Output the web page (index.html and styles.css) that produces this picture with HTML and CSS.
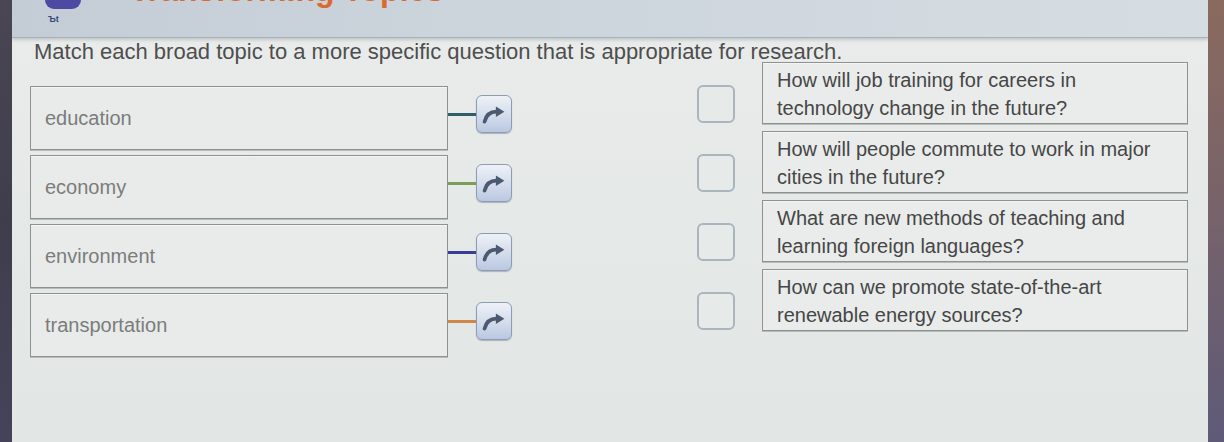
FILE: index.html
```html
<!DOCTYPE html>
<html lang="en">
<head>
<meta charset="utf-8">
<title>Transforming Topics</title>
<link rel="stylesheet" href="styles.css">
</head>
<body>
<div class="screen">
  <div class="bezel bezel-left"></div>
  <main class="main">
    <header class="header">
      <div class="brand">
        <div class="brand-icon"></div>
        <div class="brand-label">Ъt</div>
      </div>
      <div class="title">Transforming Topics</div>
    </header>
    <p class="instruction">Match each broad topic to a more specific question that is appropriate for research.</p>
    <div class="board">
      <div class="topics">
        <div class="topic-row">
          <div class="topic">education</div>
          <div class="connector">
            <span class="line line-teal"></span>
            <span class="arrow-btn"><svg viewBox="0 0 36 38" width="36" height="38"><path d="M8 26 C10 18 15 15 22 15.5" fill="none" stroke="#4b5a70" stroke-width="4" stroke-linecap="round"/><path d="M20 10 L29 15.5 L20 21 Z" fill="#4b5a70"/></svg></span>
          </div>
        </div>
        <div class="topic-row">
          <div class="topic">economy</div>
          <div class="connector">
            <span class="line line-olive"></span>
            <span class="arrow-btn"><svg viewBox="0 0 36 38" width="36" height="38"><path d="M8 26 C10 18 15 15 22 15.5" fill="none" stroke="#4b5a70" stroke-width="4" stroke-linecap="round"/><path d="M20 10 L29 15.5 L20 21 Z" fill="#4b5a70"/></svg></span>
          </div>
        </div>
        <div class="topic-row">
          <div class="topic">environment</div>
          <div class="connector">
            <span class="line line-indigo"></span>
            <span class="arrow-btn"><svg viewBox="0 0 36 38" width="36" height="38"><path d="M8 26 C10 18 15 15 22 15.5" fill="none" stroke="#4b5a70" stroke-width="4" stroke-linecap="round"/><path d="M20 10 L29 15.5 L20 21 Z" fill="#4b5a70"/></svg></span>
          </div>
        </div>
        <div class="topic-row">
          <div class="topic">transportation</div>
          <div class="connector">
            <span class="line line-orange"></span>
            <span class="arrow-btn"><svg viewBox="0 0 36 38" width="36" height="38"><path d="M8 26 C10 18 15 15 22 15.5" fill="none" stroke="#4b5a70" stroke-width="4" stroke-linecap="round"/><path d="M20 10 L29 15.5 L20 21 Z" fill="#4b5a70"/></svg></span>
          </div>
        </div>
      </div>
      <div class="targets">
        <div class="target-row"><span class="checkbox"></span></div>
        <div class="target-row"><span class="checkbox"></span></div>
        <div class="target-row"><span class="checkbox"></span></div>
        <div class="target-row"><span class="checkbox"></span></div>
      </div>
      <div class="questions">
        <div class="question">How will job training for careers in<br>technology change in the future?</div>
        <div class="question">How will people commute to work in major<br>cities in the future?</div>
        <div class="question">What are new methods of teaching and<br>learning foreign languages?</div>
        <div class="question">How can we promote state-of-the-art<br>renewable energy sources?</div>
      </div>
    </div>
  </main>
  <div class="bezel bezel-right"></div>
</div>
</body>
</html>
```

FILE: styles.css
```css
* { box-sizing: border-box; }
html, body { margin: 0; padding: 0; }
body {
  width: 1224px;
  height: 442px;
  overflow: hidden;
  font-family: "Liberation Sans", Arial, sans-serif;
  background: #3d3b48;
}
.screen {
  display: flex;
  width: 1224px;
  height: 442px;
}
.bezel-left {
  width: 12px;
  background: linear-gradient(180deg, #4a4654 0%, #3f3d4c 50%, #45435a 100%);
}
.bezel-right {
  width: 16px;
  background: linear-gradient(180deg, #8a6a5e 0%, #7a6468 40%, #5e5a78 100%);
}
.main {
  flex: 1;
  display: flex;
  flex-direction: column;
  background: linear-gradient(180deg, #e9ecea 0%, #e4e8e7 60%, #e2e6e5 100%);
  overflow: hidden;
}
.header {
  height: 38px;
  flex: none;
  display: flex;
  align-items: flex-start;
  background: linear-gradient(90deg, #c4ccd6 0%, #ccd4dc 40%, #d6dde2 100%);
  border-bottom: 1px solid #a9b2bb;
  box-shadow: 0 2px 3px rgba(120, 130, 140, 0.35);
  overflow: hidden;
}
.brand {
  width: 40px;
  margin-left: 33px;
  display: flex;
  flex-direction: column;
  align-items: flex-start;
}
.brand-icon {
  width: 36px;
  height: 9px;
  background: #4c4aa2;
  border-radius: 0 0 10px 10px;
}
.brand-label {
  margin-top: 5px;
  margin-left: 3px;
  font-size: 9px;
  font-weight: bold;
  color: #3a4a7a;
  line-height: 10px;
}
.title {
  margin-left: 45px;
  margin-top: -26px;
  font-size: 32px;
  font-weight: bold;
  color: #dc6a2e;
  line-height: 32px;
}
.instruction {
  margin: 0 0 0 22px;
  padding-top: 4px;
  font-size: 22px;
  line-height: 20px;
  height: 24px;
  color: #4e4e4e;
}
.board {
  display: flex;
  align-items: flex-start;
  padding-left: 18px;
}
.topics {
  width: 484px;
  margin-top: 24px;
  display: flex;
  flex-direction: column;
  gap: 5px;
}
.topic-row {
  display: flex;
  align-items: center;
  height: 64px;
}
.topic {
  width: 418px;
  height: 64px;
  display: flex;
  align-items: center;
  padding-left: 14px;
  font-size: 20px;
  color: #7c7c7c;
  background: #e8ebe9;
  border: 1px solid #8d918f;
  box-shadow: 0 1px 0 #b8bcba, inset 0 1px 0 #f4f6f5;
}
.connector {
  display: flex;
  align-items: center;
  margin-bottom: 8px;
}
.line {
  width: 28px;
  height: 3px;
}
.line-teal { background: #2f5d68; }
.line-olive { background: #7d9c58; }
.line-indigo { background: #3b3c96; }
.line-orange { background: #d08748; }
.arrow-btn {
  width: 36px;
  height: 38px;
  border-radius: 6px;
  border: 1px solid #8e9cb2;
  background: linear-gradient(180deg, #eef1f7 0%, #d6deec 50%, #b9c8e2 100%);
  box-shadow: 0 1px 1px rgba(90, 100, 120, 0.4);
  display: flex;
}
.arrow-btn svg { display: block; }
.targets {
  width: 38px;
  margin-left: 183px;
  margin-top: 23px;
  display: flex;
  flex-direction: column;
}
.target-row {
  height: 69px;
}
.checkbox {
  display: block;
  width: 38px;
  height: 38px;
  border: 2px solid #aab5bd;
  border-radius: 6px;
  background: #e6eae9;
}
.questions {
  width: 426px;
  margin-left: 27px;
  display: flex;
  flex-direction: column;
  gap: 7px;
}
.question {
  height: 62px;
  padding: 3px 0 0 14px;
  font-size: 20px;
  line-height: 28px;
  color: #464646;
  background: #e9ecea;
  border: 1px solid #8d918f;
  box-shadow: 0 1px 0 #b8bcba, inset 0 1px 0 #f4f6f5;
  white-space: nowrap;
}
```
